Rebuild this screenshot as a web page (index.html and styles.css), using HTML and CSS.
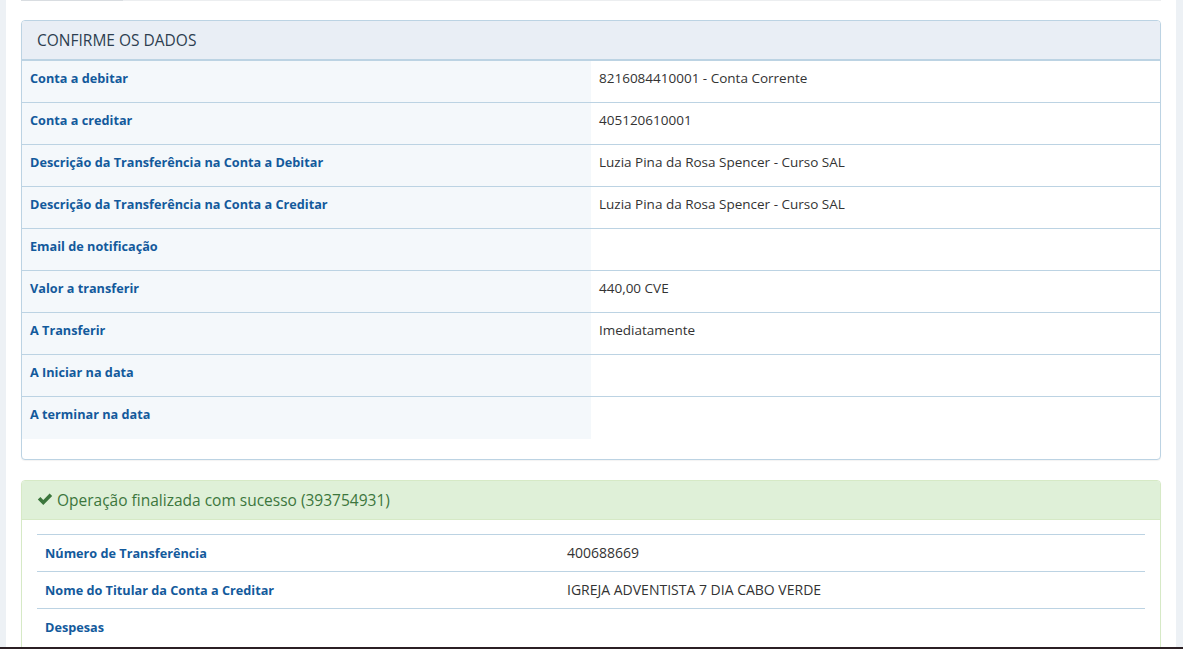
FILE: index.html
```html
<!DOCTYPE html>
<html lang="pt">
<head>
<meta charset="utf-8">
<title>Confirme os dados</title>
<link rel="stylesheet" href="styles.css">
</head>
<body>
<div class="page">
  <div class="top-strip"><span class="top-strip-dark"></span></div>

  <section class="panel panel-info">
    <header class="panel-heading">CONFIRME OS DADOS</header>
    <table class="data">
      <tr><th>Conta a debitar</th><td>8216084410001 - Conta Corrente</td></tr>
      <tr><th>Conta a creditar</th><td>405120610001</td></tr>
      <tr><th>Descrição da Transferência na Conta a Debitar</th><td>Luzia Pina da Rosa Spencer - Curso SAL</td></tr>
      <tr><th>Descrição da Transferência na Conta a Creditar</th><td>Luzia Pina da Rosa Spencer - Curso SAL</td></tr>
      <tr><th>Email de notificação</th><td></td></tr>
      <tr><th>Valor a transferir</th><td>440,00 CVE</td></tr>
      <tr><th>A Transferir</th><td>Imediatamente</td></tr>
      <tr><th>A Iniciar na data</th><td></td></tr>
      <tr><th>A terminar na data</th><td></td></tr>
    </table>
  </section>

  <section class="panel panel-success">
    <header class="panel-heading success-heading">
      <svg class="check" viewBox="0 0 16 14" width="16" height="14" aria-hidden="true"><path d="M0.8 7.6 L3.4 5.0 L6.3 7.9 L12.6 1.4 L15.2 4.0 L6.3 12.9 Z" fill="#3c763d"/></svg>
      <span>Operação finalizada com sucesso (393754931)</span>
    </header>
    <div class="panel-body">
      <table class="result">
        <tr><th>Número de Transferência</th><td>400688669</td></tr>
        <tr><th>Nome do Titular da Conta a Creditar</th><td>IGREJA ADVENTISTA 7 DIA CABO VERDE</td></tr>
        <tr><th>Despesas</th><td></td></tr>
      </table>
    </div>
  </section>
</div>
<div class="taskbar"></div>
</body>
</html>
```

FILE: styles.css
```css
html, body {
  margin: 0;
  padding: 0;
  height: 649px;
  overflow: hidden;
}
body {
  background: #edf1f5;
  font-family: "Open Sans", "Noto Sans", sans-serif;
  font-size: 13.5px;
  color: #333;
}
.page {
  background: #fff;
  margin: 0 7px 0 6px;
  padding: 0 15px;
  height: 649px;
  overflow: hidden;
}
.top-strip {
  height: 1px;
  background: #eceef0;
  display: flex;
}
.top-strip-dark {
  width: 102px;
  background: #d9dde1;
}
.panel {
  margin-top: 19px;
  margin-bottom: 20px;
  border: 1px solid #bcd3e3;
  border-radius: 4px;
  background: #fff;
  box-shadow: 0 1px 1px rgba(0,0,0,.05);
}
.panel-heading {
  height: 38px;
  padding: 0 15px;
  display: flex;
  align-items: center;
  font-size: 15.5px;
  color: #2d3e50;
  background: #e9eef5;
  border-bottom: 1px solid #bcd3e3;
  border-radius: 3px 3px 0 0;
}
.data {
  width: 100%;
  border-collapse: collapse;
  margin-bottom: 20px;
}
.data th, .data td {
  border-top: 1px solid #bcd3e3;
  height: 42px;
  padding: 7px 8px 8px;
  box-sizing: border-box;
  vertical-align: top;
  text-align: left;
  line-height: 20px;
}
.data th {
  width: 569px;
  background: #f4f8fb;
  color: #135a9c;
  font-size: 12.7px;
  font-weight: 700;
}
.data td {
  color: #333;
}
.panel-success {
  border-color: #d6e9c6;
  margin-top: 0;
}
.success-heading {
  background: #dff0d8;
  border-bottom-color: #d6e9c6;
  color: #3c763d;
  gap: 4px;
  height: 38px;
}
.check {
  flex: none;
  margin-top: -1px;
}
.panel-body {
  padding: 14px 15px 15px;
}
.result {
  width: 100%;
  border-collapse: collapse;
}
.result th, .result td {
  border-top: 1px solid #bcd3e3;
  padding: 8px;
  line-height: 20px;
  text-align: left;
  vertical-align: top;
}
.result th {
  box-sizing: border-box;
  width: 522px;
  color: #135a9c;
  font-size: 12.7px;
  font-weight: 700;
}
.result td {
  color: #333;
  font-size: 14px;
}
.taskbar {
  position: fixed;
  left: 0;
  right: 0;
  bottom: 0;
  height: 2px;
  background: #2b1f24;
}
```
